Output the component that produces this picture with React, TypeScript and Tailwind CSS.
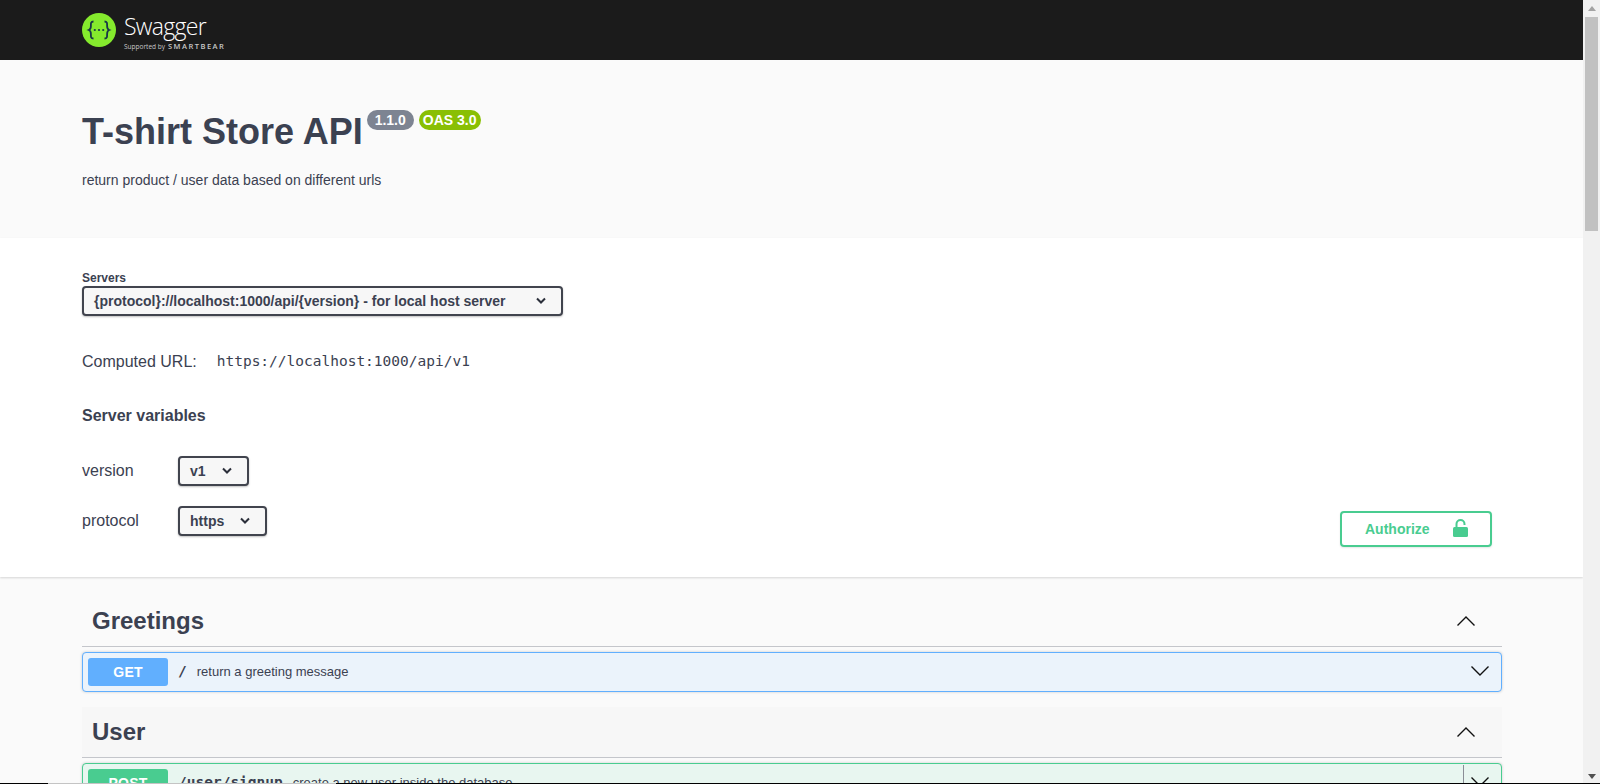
const sans = "font-['Liberation_Sans',Arial,sans-serif]";

function SelectArrow() {
  return (
    <svg className="absolute right-[14px] top-1/2 -translate-y-1/2" width="12" height="8" viewBox="0 0 12 8" fill="none" stroke="#2b2f3a" strokeWidth={2}>
      <path d="M2 1.5 6 5.5l4-4" />
    </svg>
  );
}

function FakeSelect({ label, className }: { label: string; className: string }) {
  return (
    <div className={`relative flex h-[30px] items-center rounded-[4px] border-2 border-[#41444e] bg-[#f7f7f7] pl-[10px] text-[14px] font-bold text-[#3b4151] shadow-[0_1px_2px_0_rgba(0,0,0,0.25)] ${className}`}>
      {label}
      <SelectArrow />
    </div>
  );
}

function Chevron({ up }: { up?: boolean }) {
  return (
    <svg width="20" height="12" viewBox="0 0 20 12" fill="none" stroke="#111" strokeWidth={1.4}>
      <path d={up ? "M1.5 10.5 10 2l8.5 8.5" : "M1.5 1.5 10 10l8.5-8.5"} />
    </svg>
  );
}

function TagHeader({ name, className }: { name: string; className: string }) {
  return (
    <div className={`flex items-center justify-between border-b border-[#c4c6cb] pl-[10px] pr-[26px] ${className}`}>
      <h3 className="text-[24px] font-bold text-[#3b4151]">{name}</h3>
      <Chevron up />
    </div>
  );
}

function Operation({ method, path, summary, border, bg, badge, divider }: {
  method: string;
  path: string;
  summary: string;
  border: string;
  bg: string;
  badge: string;
  divider?: boolean;
}) {
  return (
    <div className={`mt-[5px] flex h-[40px] items-center rounded-[4px] border px-[5px] shadow-[0_0_3px_rgba(0,0,0,0.19)] ${border} ${bg}`}>
      <span className={`flex h-[28px] w-[80px] items-center justify-center rounded-[3px] text-[14px] font-bold tracking-[0.2px] text-white ${badge}`}>{method}</span>
      <span className="ml-[10px] font-['DejaVu_Sans_Mono',monospace] text-[14.500px] font-bold text-[#3b4151]">{path}</span>
      <span className="ml-[10px] text-[13px] text-[#3b4151]">{summary}</span>
      <div className="ml-auto flex items-center">
        {divider && <div className="mr-[6px] h-[36px] w-px bg-[#8a8d96]" />}
        <div className="mb-[2px] mr-[6px] flex items-center"><Chevron /></div>
      </div>
    </div>
  );
}

function SwaggerLogo() {
  return (
    <svg width="34" height="34" viewBox="0 0 34 34" fill="none">
      <circle cx="17" cy="17" r="17" fill="#85ea2d" />
      <path d="M11.500 8.500c-3 0-2.600 2.200-2.600 4.500 0 2.200-.6 3.400-2.100 4 1.500.6 2.100 1.800 2.100 4 0 2.300-.4 4.500 2.600 4.500M22.500 8.500c3 0 2.600 2.200 2.600 4.500 0 2.200.6 3.400 2.100 4-1.500.6-2.100 1.800-2.100 4 0 2.300.4 4.500-2.600 4.500" stroke="#173647" strokeWidth="1.800" />
      <circle cx="12.800" cy="17" r="1.100" fill="#173647" />
      <circle cx="17" cy="17" r="1.100" fill="#173647" />
      <circle cx="21.200" cy="17" r="1.100" fill="#173647" />
    </svg>
  );
}

export default function App() {
  return (
    <div className={`relative flex h-[784px] overflow-hidden bg-white text-[#3b4151] ${sans}`}>
      <div className="min-w-0 flex-1">
        <header className="flex h-[60px] items-center bg-[#1b1b1b] pl-[82px]">
          <SwaggerLogo />
          <div className="ml-[8px] flex flex-col pt-[2px] text-white">
            <span className="font-['Open_Sans',sans-serif] text-[23px] font-light leading-[30px] tracking-[-0.7px]">Swagger</span>
            <span className="flex items-baseline gap-[3px] whitespace-nowrap leading-[10px] text-[#c9c9c9]">
              <span className="font-['Open_Sans',sans-serif] text-[6.500px]">Supported by</span>
              <span className="font-['Open_Sans',sans-serif] text-[7.500px] font-semibold tracking-[1.500px]">SMARTBEAR</span>
            </span>
          </div>
        </header>

        <section className="h-[178px] bg-[#fafafa] pl-[82px] pt-[50px]">
          <div className="flex items-start">
            <h2 className="text-[36px] font-bold leading-[43px]">T-shirt Store API</h2>
            <span className="ml-[4px] flex h-[20px] w-[47px] items-center justify-center rounded-[57px] bg-[#7d8492] text-[14px] font-bold leading-none text-white">1.1.0</span>
            <span className="ml-[5px] flex h-[20px] w-[62px] items-center justify-center rounded-[57px] bg-[#89bf04] text-[14px] font-bold leading-none text-white">OAS 3.0</span>
          </div>
          <p className="mt-[17px] text-[14px] leading-[20px]">return product / user data based on different urls</p>
        </section>

        <section className="relative h-[339px] pl-[82px] pt-[33px] shadow-[0_1px_2px_0_rgba(0,0,0,0.15)]">
          <div className="text-[12px] font-bold leading-[15px]">Servers</div>
          <FakeSelect label="{protocol}://localhost:1000/api/{version} - for local host server" className="w-[481px]" />
          <div className="mt-[34px] flex items-center">
            <span className="text-[16px] leading-[24px]">Computed URL:</span>
            <span className="ml-[20px] font-['DejaVu_Sans_Mono',monospace] text-[14.500px]">https://localhost:1000/api/v1</span>
          </div>
          <h4 className="mt-[30px] text-[16px] font-bold leading-[24px]">Server variables</h4>
          <div className="mt-[28px] flex items-center">
            <span className="w-[96px] text-[16px]">version</span>
            <FakeSelect label="v1" className="w-[71px]" />
          </div>
          <div className="mt-[20px] flex items-center">
            <span className="w-[96px] text-[16px]">protocol</span>
            <FakeSelect label="https" className="w-[89px]" />
          </div>
          <div className="absolute left-[1340px] top-[273px] flex h-[36px] w-[152px] items-center rounded-[4px] border-2 border-[#49cc90] pl-[23px] text-[14px] font-bold text-[#49cc90] shadow-[0_1px_2px_rgba(0,0,0,0.1)]">
            Authorize
            <svg className="mb-[2px] ml-[23px]" width="15" height="18" viewBox="0 0 15 18" fill="none">
              <rect x="0" y="8" width="15" height="10" rx="1.500" fill="#49cc90" />
              <path d="M3.500 9V5a4 4 0 0 1 8 0v1" stroke="#49cc90" strokeWidth="2" />
            </svg>
          </div>
        </section>

        <main className="h-[207px] overflow-hidden bg-[#fafafa] pl-[82px] pr-[81px] pt-[20px]">
          <TagHeader name="Greetings" className="h-[50px] pb-[2px]" />
          <Operation method="GET" path="/" summary="return a greeting message" border="border-[#61affe]" bg="bg-[#ebf3fb]" badge="bg-[#61affe]" />
          <div className="mt-[15px]">
            <TagHeader name="User" className="h-[51px] bg-[#f7f7f7] pb-[1px]" />
          </div>
          <Operation method="POST" path="/user/signup" summary="create a new user inside the database" border="border-[#49cc90]" bg="bg-[#e8f6f0]" badge="bg-[#49cc90]" divider />
        </main>
      </div>

      <aside className="relative flex w-[17px] flex-col items-center bg-[#f1f1f1]">
        <svg className="mt-[6px]" width="8" height="5" viewBox="0 0 8 5" fill="#a3a3a3"><path d="M4 0l4 5H0Z" /></svg>
        <div className="mt-[6px] h-[214px] w-[13px] bg-[#c1c1c1]" />
        <svg className="absolute bottom-[5px]" width="8" height="5" viewBox="0 0 8 5" fill="#505050"><path d="M4 5 0 0h8Z" /></svg>
      </aside>

      <div className="absolute inset-x-0 bottom-0 flex h-px bg-black">
        <div className="ml-[48px] w-[288px] bg-[#c4c4c4]" />
      </div>
    </div>
  );
}
